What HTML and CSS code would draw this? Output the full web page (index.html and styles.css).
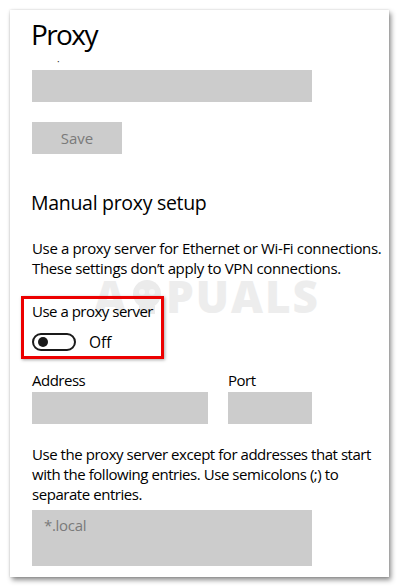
FILE: index.html
```html
<!DOCTYPE html>
<html>
<head>
<meta charset="utf-8">
<link rel="stylesheet" href="styles.css">
</head>
<body>
<div class="card">
  <h1 class="title">Proxy</h1>
  <div class="cut">·</div>
  <div class="input wide"></div>
  <div class="btn">Save</div>
  <h2 class="subtitle">Manual proxy setup</h2>
  <p class="text">Use a proxy server for Ethernet or Wi-Fi connections.<br>These settings don’t apply to VPN connections.</p>
  <div class="watermark" aria-hidden="true"><span>A</span><svg class="wm-face" width="34" height="36" viewBox="0 0 34 36"><circle cx="17" cy="16" r="14" fill="#ebebeb"/><circle cx="12" cy="14" r="3" fill="#f6f6f6"/><circle cx="22" cy="14" r="3" fill="#f6f6f6"/><rect x="9" y="28" width="16" height="8" fill="#ebebeb"/></svg><span>PUALS</span></div>
  <div class="highlight">
    <div class="label">Use a proxy server</div>
    <div class="toggle-row">
      <div class="toggle"><div class="knob"></div></div>
      <span class="off">Off</span>
    </div>
  </div>
  <div class="fields">
    <div class="field">
      <div class="label">Address</div>
      <div class="input addr"></div>
    </div>
    <div class="field">
      <div class="label">Port</div>
      <div class="input port"></div>
    </div>
  </div>
  <p class="text text2">Use the proxy server except for addresses that start with the following entries. Use semicolons (;) to separate entries.</p>
  <div class="textarea">*.local</div>
</div>
</body>
</html>
```
FILE: styles.css
```css
* { box-sizing: border-box; }
html, body { margin: 0; padding: 0; background: #ffffff; }
body {
  font-family: "Open Sans", "Noto Sans", sans-serif;
  color: #000;
  width: 400px;
  height: 588px;
  overflow: hidden;
}
.card {
  position: relative;
  margin: 10px 0 0 10px;
  width: 379px;
  height: 567px;
  background: #fff;
  box-shadow: 2px 3px 5px rgba(0,0,0,0.45), 0 0 2px rgba(0,0,0,0.15);
  padding: 8px 0 0 22px;
}
.title {
  margin: 0 0 0 -1px;
  font-weight: 400;
  font-size: 28px;
  line-height: 32px;
  letter-spacing: -1.6px;
  height: 40px;
}
.cut {
  height: 12px;
  font-size: 10px;
  line-height: 6px;
  padding-left: 25px;
  color: #333;
}
.input { background: #cccccc; height: 32px; }
.wide { width: 280px; }
.btn {
  margin-top: 20px;
  width: 90px;
  height: 32px;
  background: #cccccc;
  color: #7a7a7a;
  font-size: 15px;
  line-height: 32px;
  text-align: center;
}
.subtitle {
  margin: 36px 0 0 -1px;
  font-weight: 400;
  font-size: 19.5px;
  line-height: 26px;
  letter-spacing: -0.3px;
}
.text {
  position: relative;
  z-index: 1;
  margin: 22px 0 0 0;
  font-size: 15px;
  line-height: 20px;
  letter-spacing: -0.35px;
  width: 360px;
}
.watermark {
  position: absolute;
  left: 84px;
  top: 264px;
  display: flex;
  align-items: center;
  font-family: "Open Sans", sans-serif;
  font-weight: 800;
  font-size: 44px;
  line-height: 44px;
  color: #ededed;
  letter-spacing: 2px;
  z-index: 0;
}
.wm-face { margin: 0 2px; }
.highlight {
  position: relative;
  z-index: 1;
  margin: 18px 0 0 -11px;
  width: 143px;
  height: 63px;
  border: 3px solid #ec0000;
  box-shadow: 1px 1px 3px rgba(0,0,0,0.35);
  padding: 2px 0 0 8px;
}
.label {
  font-size: 15px;
  line-height: 20px;
  letter-spacing: -0.5px;
}
.toggle-row {
  display: flex;
  align-items: center;
  margin-top: 11px;
  gap: 13px;
}
.toggle {
  width: 44px;
  height: 18px;
  border: 2px solid #1a1a1a;
  border-radius: 10px;
  display: flex;
  align-items: center;
  padding-left: 4px;
}
.knob { width: 10px; height: 10px; border-radius: 50%; background: #1a1a1a; }
.off { font-size: 15.5px; line-height: 20px; }
.fields {
  display: flex;
  gap: 20px;
  margin-top: 11px;
}
.label + .input { margin-top: 2px; }
.addr { width: 176px; }
.port { width: 84px; }
.text2 { margin-top: 20px; width: 350px; letter-spacing: -0.45px; }
.textarea {
  margin-top: 6px;
  width: 280px;
  height: 56px;
  background: #cccccc;
  color: #7a7a7a;
  font-size: 15px;
  line-height: 20px;
  padding: 5px 0 0 12px;
  letter-spacing: -0.3px;
}
```
